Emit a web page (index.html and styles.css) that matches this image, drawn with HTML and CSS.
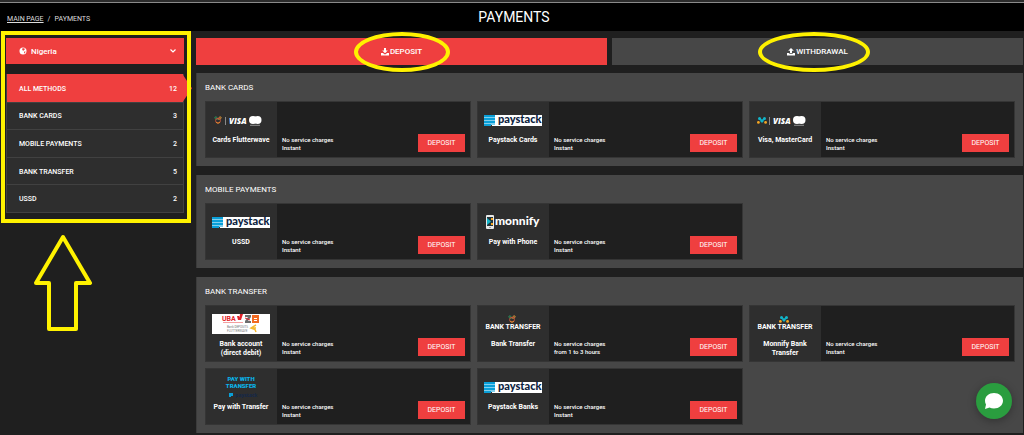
FILE: index.html
```html
<!DOCTYPE html>
<html lang="en">
<head>
  <meta charset="UTF-8">
  <meta name="viewport" content="width=device-width, initial-scale=1.0">
  <title>Payments</title>
  <link rel="stylesheet" href="styles.css">
</head>
<body>
  <!-- Shared logos -->
  <svg class="sprite" aria-hidden="true">
    <symbol id="flutterwave" viewBox="0 0 8 8">
      <path d="M4 3C3 .6 1 .6 .8 1.600S2 3.400 4 3" fill="none" stroke="#2f9e62" stroke-width="1"/>
      <path d="M4 3C5 .6 7 .6 7.200 1.600S6 3.400 4 3" fill="none" stroke="#f0a13a" stroke-width="1"/>
      <circle cx="4" cy="4.700" r="2.400" fill="none" stroke="#c5533b" stroke-width="1"/>
      <path d="M2.200 6.300A2.400 2.400 0 0 0 6 6" fill="none" stroke="#e8912d" stroke-width="1"/>
    </symbol>
    <symbol id="monnify" viewBox="0 0 10 7">
      <path d="M2.500 1.500L5 4 7.500 1.500" fill="none" stroke="#12a8bd" stroke-width="2"/>
      <circle cx="2.500" cy="1.500" r="1.500" fill="#12b5c9"/>
      <circle cx="7.500" cy="1.500" r="1.500" fill="#12b5c9"/>
      <circle cx="5" cy="4.300" r="1.300" fill="#12b5c9"/>
      <circle cx="1.400" cy="5.400" r="1.400" fill="#f5a623"/>
      <circle cx="8.600" cy="5.400" r="1.400" fill="#f5a623"/>
    </symbol>
    <symbol id="visa-mc" viewBox="0 0 38 12">
      <path d="M1.500 2v8" stroke="#8a8a8a" stroke-width="1"/>
      <text x="5" y="9" class="logo-visa">VISA</text>
      <circle cx="29" cy="5" r="4" fill="#fff"/>
      <circle cx="33.500" cy="5" r="4" fill="#fff"/>
      <path d="M26 10.300h10" stroke="#8f8f8f" stroke-width="1"/>
    </symbol>
    <symbol id="paystack" viewBox="0 0 58 24">
      <path d="M8 7h50v11H8z" fill="#fff"/>
      <path d="M0 7h11v10H7v1H0z" fill="#7fcfee"/>
      <path d="M0 7h11v2H0zM0 10h11v2H0zM0 13h11v2H0zM0 16h7v2H0z" fill="#0a9fd8"/>
      <text x="14" y="15" class="logo-paystack">paystack</text>
    </symbol>
  </svg>

  <header class="header">
    <nav class="breadcrumb">
      <a href="#">MAIN PAGE</a>
      <span>/</span>
      <span>PAYMENTS</span>
    </nav>
    <h1>PAYMENTS</h1>
  </header>

  <div class="page">
    <aside class="sidebar">
      <div class="filters">
        <div class="country">
          <svg class="country-globe" viewBox="0 0 8 8">
            <circle cx="4" cy="4" r="3.500" fill="#fff"/>
            <path d="M3.400 1.300L5.400 1.200 5.800 2.600 4.400 3.800 3.200 3zM5.200 4.600L6.600 4.400 6 6 5 6.400z" fill="#ef3f3f"/>
          </svg>
          <select aria-label="Country">
            <option>Nigeria</option>
          </select>
          <svg class="country-chevron" viewBox="0 0 8 8">
            <path d="M1.500 2.500L4 5l2.500-2.500" fill="none" stroke="#fff" stroke-width="1.200"/>
          </svg>
        </div>
        <nav class="methods">
          <a href="#" class="active"><span>ALL METHODS</span><span>12</span></a>
          <a href="#"><span>BANK CARDS</span><span>3</span></a>
          <a href="#"><span>MOBILE PAYMENTS</span><span>2</span></a>
          <a href="#"><span>BANK TRANSFER</span><span>5</span></a>
          <a href="#"><span>USSD</span><span>2</span></a>
        </nav>
      </div>
      <svg class="arrow" viewBox="0 0 62 100">
        <path d="M31 4L58 50H44V96H17V50H4z" fill="none" stroke="#fff200" stroke-width="4" stroke-linejoin="round"/>
      </svg>
    </aside>

    <main class="content">
      <div class="tabs">
        <button class="tab tab-active">
          <svg class="tab-icon" viewBox="0 0 8 8">
            <path d="M3 0h2v2.500h1.800L4 5.300 1.200 2.500H3zM0 5h2l1.300 1.300h1.400L6 5h2v2.500H0z" fill="#fff"/>
          </svg>
          DEPOSIT
          <span class="ring"></span>
        </button>
        <button class="tab">
          <svg class="tab-icon" viewBox="0 0 8 8">
            <path d="M3 5.300h2V2.800h1.800L4 0 1.200 2.800H3zM0 5h2.400v1h3.200V5H8v2.500H0z" fill="#fff"/>
          </svg>
          WITHDRAWAL
          <span class="ring ring-wide"></span>
        </button>
      </div>

      <section class="panel">
        <h2>BANK CARDS</h2>
        <div class="cards">
          <article class="card">
            <div class="brand">
              <svg class="logo" viewBox="0 0 58 24">
                <use href="#flutterwave" x="2" y="8" width="8" height="8"/>
                <use href="#visa-mc" x="12" y="7" width="38" height="12"/>
              </svg>
              <h3>Cards Flutterwave</h3>
            </div>
            <p>No service charges<br>Instant</p>
            <button class="deposit">DEPOSIT</button>
          </article>
          <article class="card">
            <div class="brand">
              <svg class="logo" viewBox="0 0 58 24"><use href="#paystack"/></svg>
              <h3>Paystack Cards</h3>
            </div>
            <p>No service charges<br>Instant</p>
            <button class="deposit">DEPOSIT</button>
          </article>
          <article class="card">
            <div class="brand">
              <svg class="logo" viewBox="0 0 58 24">
                <use href="#monnify" x="1" y="9" width="10" height="7"/>
                <use href="#visa-mc" x="12" y="7" width="38" height="12"/>
              </svg>
              <h3>Visa, MasterCard</h3>
            </div>
            <p>No service charges<br>Instant</p>
            <button class="deposit">DEPOSIT</button>
          </article>
        </div>
      </section>

      <section class="panel">
        <h2>MOBILE PAYMENTS</h2>
        <div class="cards">
          <article class="card">
            <div class="brand">
              <svg class="logo" viewBox="0 0 58 24"><use href="#paystack"/></svg>
              <h3>USSD</h3>
            </div>
            <p>No service charges<br>Instant</p>
            <button class="deposit">DEPOSIT</button>
          </article>
          <article class="card">
            <div class="brand">
              <svg class="logo" viewBox="0 0 58 24">
                <rect x="2" y="5" width="8" height="14" rx="1" fill="#e9e9e9"/>
                <rect x="3" y="7" width="6" height="9" fill="#23343a"/>
                <path d="M3 8l4 3.500-4 3.500z" fill="#12b5c9"/>
                <path d="M7 8h2v2H7zM7 13h2v2H7z" fill="#f5a623"/>
                <circle cx="6" cy="17.500" r=".6" fill="#555"/>
                <text x="11" y="15" class="logo-monnify">monnify</text>
              </svg>
              <h3>Pay with Phone</h3>
            </div>
            <p>No service charges<br>Instant</p>
            <button class="deposit">DEPOSIT</button>
          </article>
        </div>
      </section>

      <section class="panel">
        <h2>BANK TRANSFER</h2>
        <div class="cards">
          <article class="card">
            <div class="brand">
              <svg class="logo" viewBox="0 0 58 24">
                <path d="M0 2h58v20H0z" fill="#fff"/>
                <text x="10" y="9" class="logo-uba">UBA</text>
                <path d="M11 10.500h20" stroke="#f3a0a0" stroke-width="1"/>
                <path d="M25 4h2l1 4h-2zM28 2h3l-2 6h-2z" fill="#e2232b"/>
                <path d="M33 3h6v2l-3 4h3v2h-6V9l3-4h-3z" fill="#6d6d6d"/>
                <path d="M33 6l5 2" stroke="#e2232b" stroke-width="1"/>
                <path d="M40 3h7v8h-7z" fill="#f26a21"/>
                <path d="M42 6.500h3M42 8.500h3" stroke="#fff" stroke-width="1"/>
                <text x="15" y="16" class="logo-tiny">Bank DEPOSITS</text>
                <text x="15" y="20" class="logo-tiny">FLUTTERWAVE</text>
                <path d="M44 13l-5 3 4 1.500L44 20M40 16h4" fill="none" stroke="#f5b82e" stroke-width="1.500"/>
              </svg>
              <h3>Bank account (direct debit)</h3>
            </div>
            <p>No service charges<br>Instant</p>
            <button class="deposit">DEPOSIT</button>
          </article>
          <article class="card">
            <div class="brand">
              <svg class="logo" viewBox="0 0 58 24">
                <use href="#flutterwave" x="24" y="3" width="8" height="8"/>
                <text x="29" y="17" class="logo-bank">BANK TRANSFER</text>
              </svg>
              <h3>Bank Transfer</h3>
            </div>
            <p>No service charges<br>from 1 to 3 hours</p>
            <button class="deposit">DEPOSIT</button>
          </article>
          <article class="card">
            <div class="brand">
              <svg class="logo" viewBox="0 0 58 24">
                <use href="#monnify" x="23" y="4" width="10" height="7"/>
                <text x="29" y="17" class="logo-bank">BANK TRANSFER</text>
              </svg>
              <h3>Monnify Bank Transfer</h3>
            </div>
            <p>No service charges<br>Instant</p>
            <button class="deposit">DEPOSIT</button>
          </article>
          <article class="card">
            <div class="brand">
              <svg class="logo" viewBox="0 0 58 24">
                <text x="29" y="6" class="logo-pay">PAY WITH</text>
                <text x="29" y="13" class="logo-pay">TRANSFER</text>
                <path d="M17 18h4v3h-2v1h-2z" fill="#0a9fd8"/>
                <text x="23" y="22" class="logo-pay-small">paystack</text>
              </svg>
              <h3>Pay with Transfer</h3>
            </div>
            <p>No service charges<br>Instant</p>
            <button class="deposit">DEPOSIT</button>
          </article>
          <article class="card">
            <div class="brand">
              <svg class="logo" viewBox="0 0 58 24"><use href="#paystack"/></svg>
              <h3>Paystack Banks</h3>
            </div>
            <p>No service charges<br>Instant</p>
            <button class="deposit">DEPOSIT</button>
          </article>
        </div>
      </section>
    </main>
  </div>

  <button class="chat" aria-label="Chat">
    <svg viewBox="0 0 20 18">
      <path d="M10 1c5 0 9 3.300 9 7.800S15 16.500 10 16.500c-1.700 0-3.200-.3-4.500-1L1 17l1-4.500C1.300 11.400 1 10.200 1 8.800 1 4.300 5 1 10 1z" fill="#fff"/>
    </svg>
  </button>
</body>
</html>
```

FILE: styles.css
```css
* {
  box-sizing: border-box;
}

body {
  margin: 0;
  background-color: #1f1f1f;
  color: #fff;
  font-family: Roboto, "Liberation Sans", sans-serif;
  font-size: 7px;
}

h1, h2, h3, p {
  margin: 0;
}

a {
  color: inherit;
}

button, select {
  border: 0;
  color: inherit;
  font-family: inherit;
  font-size: 7px;
}

.sprite {
  display: none;
}

/* Header */
.header {
  display: grid;
  grid-template-columns: 1fr auto 1fr;
  align-items: center;
  height: 31px;
  padding: 0 3px 0 7px;
  background-color: #000;
  border-top: 2px solid #2b2b2b;
  box-shadow: inset 0 1px #8a8a8a;
}

.header h1 {
  font-size: 14px;
  font-weight: 400;
  line-height: 28px;
}

.breadcrumb {
  display: flex;
  gap: 4px;
  padding-top: 4px;
  color: #ddd;
}

.page {
  display: flex;
  gap: 5px;
  padding-right: 1px;
}

/* Sidebar */
.sidebar {
  flex: 0 0 191px;
  padding-left: 1px;
}

.filters {
  position: relative;
  padding: 7px 7px 10px 5px;
}

.filters::after {
  content: "";
  position: absolute;
  inset: 0;
  border: 4px solid #fff200;
  pointer-events: none;
}

.country {
  position: relative;
}

.country select {
  display: block;
  width: 100%;
  height: 26px;
  padding: 0 25px;
  appearance: none;
  background-color: #ef3f3f;
  font-size: 8px;
  font-weight: 500;
}

.country svg {
  position: absolute;
  top: 9px;
  width: 8px;
  height: 8px;
  pointer-events: none;
}

.country-globe {
  left: 13px;
}

.country-chevron {
  right: 7px;
}

.methods {
  display: grid;
  grid-auto-rows: 1fr;
  min-height: 139px;
  margin-top: 10px;
  background-color: #2e2e2e;
  border: 1px solid #414141;
  border-top: 0;
}

.methods a {
  position: relative;
  display: flex;
  align-items: center;
  justify-content: space-between;
  padding: 1px 6px 0 12px;
  border-top: 1px solid #414141;
  font-weight: 500;
  text-decoration: none;
}

.methods .active {
  background-color: #ef3f3f;
  border-color: #ef3f3f;
}

.methods .active::after {
  content: "";
  position: absolute;
  top: 0;
  bottom: 0;
  left: 100%;
  width: 9px;
  background-color: #ef3f3f;
  clip-path: polygon(0 0, 100% 50%, 0 100%);
}

.arrow {
  display: block;
  width: 62px;
  height: 100px;
  margin: 10px 0 0 31px;
}

/* Tabs */
.content {
  flex: 1;
  padding-top: 7px;
}

.tabs {
  display: grid;
  grid-template-columns: 1fr 1fr;
  gap: 5px;
}

.tab {
  position: relative;
  display: flex;
  align-items: center;
  justify-content: center;
  gap: 1px;
  height: 27px;
  padding: 0;
  background-color: #474747;
  font-size: 8px;
  font-weight: 500;
}

.tab-active {
  background-color: #ef3f3f;
}

.tab-icon {
  width: 8px;
  height: 8px;
}

.ring {
  position: absolute;
  top: -6px;
  left: 50%;
  width: 96px;
  height: 40px;
  margin-left: -48px;
  border: 4px solid #fff200;
  border-radius: 50%;
}

.ring-wide {
  width: 112px;
  margin-left: -60px;
}

/* Payment groups */
.panel {
  margin-top: 9px;
  padding: 0 8px 8px;
  background-color: #474747;
  border-left: 1px solid #3b3b3b;
}

.tabs + .panel {
  margin-top: 8px;
}

.panel h2 {
  padding-top: 2px;
  font-size: 8px;
  font-weight: 400;
  line-height: 26px;
}

.cards {
  display: grid;
  grid-template-columns: repeat(3, 1fr);
  gap: 6px;
}

.card {
  display: flex;
  align-items: flex-end;
  height: 57px;
  background-color: #1f1f1f;
  outline: 1px solid #353535;
  outline-offset: -1px;
}

.brand {
  flex: 0 0 72px;
  align-self: stretch;
  padding: 7px 4px 0;
  background-color: #2e2e2e;
  text-align: center;
}

.logo {
  display: block;
  width: 58px;
  height: 24px;
  margin: 0 auto 4px;
}

.brand h3 {
  font-size: 7px;
  font-weight: 700;
  line-height: 9px;
}

.card p {
  flex: 1;
  padding: 0 0 6px 5px;
  font-size: 6px;
  font-weight: 500;
  line-height: 8px;
}

.deposit {
  width: 47px;
  height: 18px;
  margin: 0 6px 6px 0;
  padding: 0;
  background-color: #ef3f3f;
}

/* Logo lettering */
.logo-visa {
  fill: #fff;
  font: italic 800 8px "Open Sans", sans-serif;
}

.logo-paystack {
  fill: #0c2340;
  font: 900 11px Lato, sans-serif;
}

.logo-monnify {
  fill: #fff;
  font: 900 12px Lato, sans-serif;
}

.logo-uba {
  fill: #e2232b;
  font: 700 7px Roboto, sans-serif;
}

.logo-tiny {
  fill: #777;
  font: 3px Roboto, sans-serif;
}

.logo-bank {
  fill: #fff;
  font: 700 7px Roboto, sans-serif;
  text-anchor: middle;
}

.logo-pay {
  fill: #0ab4ea;
  font: 900 6px Roboto, sans-serif;
  text-anchor: middle;
}

.logo-pay-small {
  fill: #14284a;
  font: 700 5px "Open Sans", sans-serif;
}

/* Chat bubble */
.chat {
  position: fixed;
  right: 12px;
  bottom: 16px;
  display: flex;
  align-items: center;
  justify-content: center;
  width: 36px;
  height: 36px;
  padding: 0;
  background-color: #2a9d3f;
  border-radius: 50%;
  box-shadow: 0 2px 8px rgba(0, 0, 0, 0.3);
}

.chat svg {
  width: 20px;
  height: 18px;
}
```
